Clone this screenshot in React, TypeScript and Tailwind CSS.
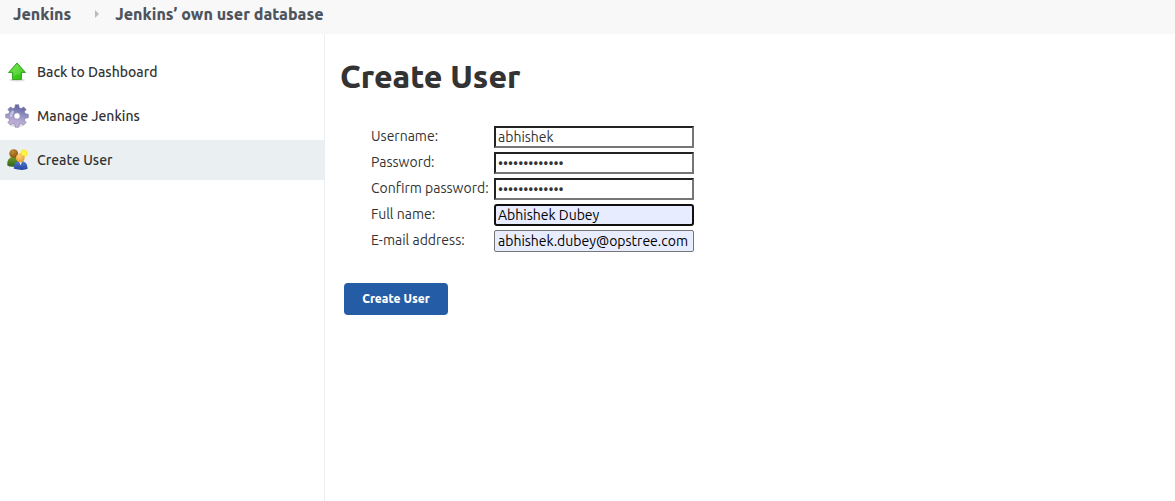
import { useState } from "react";
import type { ReactNode } from "react";

function UpArrowIcon() {
  return (
    <svg viewBox="0 0 24 24" className="size-6 shrink-0" aria-hidden="true">
      <defs>
        <linearGradient id="arrow" x1="0" y1="0" x2="1" y2="1">
          <stop offset="0" stopColor="#7be04c" />
          <stop offset="0.5" stopColor="#43d21c" />
          <stop offset="1" stopColor="#27b80c" />
        </linearGradient>
      </defs>
      <ellipse cx="12" cy="20" rx="8" ry="1.5" fill="#000" opacity="0.14" />
      <path d="M12 3 L20.5 12.5 H16.5 V19.5 H7.5 V12.5 H3.5 Z" fill="url(#arrow)" stroke="#3aa526" strokeWidth="1" strokeLinejoin="round" />
      <path d="M12 4.6 L18 11.5 H15.5 V14 Q12 14 8.6 16 V11.5 H6 Z" fill="#fff" opacity="0.15" />
    </svg>
  );
}

function GearIcon() {
  return (
    <svg viewBox="0 0 24 24" className="size-6 shrink-0" aria-hidden="true">
      <defs>
        <linearGradient id="gear" x1="0.2" y1="0" x2="0" y2="1">
          <stop offset="0" stopColor="#6667a6" />
          <stop offset="0.35" stopColor="#8f8fc0" />
          <stop offset="0.6" stopColor="#b3a8d2" />
          <stop offset="1" stopColor="#ccb6de" />
        </linearGradient>
      </defs>
      <ellipse cx="12" cy="21.3" rx="7" ry="1.8" fill="#000" opacity="0.12" />
      <path
        fill="url(#gear)"
        stroke="#7c799f"
        strokeWidth="0.6"
        strokeLinejoin="round"
        fillRule="evenodd"
        d="M10.3 0.7 H13.7 L14.2 3.8 L16.2 4.6 L18.6 2.9 L21.1 5.4 L19.4 7.8 L20.2 9.8 L23.3 10.3 V13.7 L20.2 14.2 L19.4 16.2 L21.1 18.6 L18.6 21.1 L16.2 19.4 L14.2 20.2 L13.7 23.3 H10.3 L9.8 20.2 L7.8 19.4 L5.4 21.1 L2.9 18.6 L4.6 16.2 L3.8 14.2 L0.7 13.7 V10.3 L3.8 9.8 L4.6 7.8 L2.9 5.4 L5.4 2.9 L7.8 4.6 L9.8 3.8 Z M12 8.8 A3.2 3.2 0 1 0 12 15.2 A3.2 3.2 0 1 0 12 8.8 Z"
      />
      <path d="M6.2 12.8 A6 6 0 0 1 8.6 7" fill="none" stroke="#e4e6f4" strokeWidth="2.4" opacity="0.6" />
    </svg>
  );
}

function UsersIcon() {
  return (
    <svg viewBox="0 0 24 24" className="size-6 shrink-0" aria-hidden="true">
      <defs>
        <linearGradient id="green" x1="0" y1="0" x2="0" y2="1">
          <stop offset="0" stopColor="#6d9a2c" />
          <stop offset="1" stopColor="#2f641b" />
        </linearGradient>
        <radialGradient id="brown" cx="0.4" cy="0.3" r="0.7">
          <stop offset="0" stopColor="#c48c3c" />
          <stop offset="1" stopColor="#875408" />
        </radialGradient>
        <linearGradient id="blue" x1="0" y1="0" x2="0" y2="1">
          <stop offset="0" stopColor="#5478cc" />
          <stop offset="1" stopColor="#2446a0" />
        </linearGradient>
        <radialGradient id="face" cx="0.4" cy="0.3" r="0.75">
          <stop offset="0" stopColor="#ffd280" />
          <stop offset="1" stopColor="#e79b22" />
        </radialGradient>
        <radialGradient id="glow">
          <stop offset="0" stopColor="#fffcb0" />
          <stop offset="0.5" stopColor="#fff03c" />
          <stop offset="1" stopColor="#fff03c" stopOpacity="0" />
        </radialGradient>
      </defs>
      <path d="M2.3 17.5 Q1.6 9 8.5 9 Q13 9 14 12 L12 18.5 Q5 19.5 2.3 17.5 Z" fill="url(#green)" />
      <circle cx="8.7" cy="5.6" r="4.4" fill="url(#brown)" />
      <path d="M8.8 20.8 Q8.4 13 15.5 13 Q22.6 13 22.7 20.8 Q18 23 8.8 20.8 Z" fill="url(#blue)" />
      <path d="M13.8 13 L15.6 17.5 L17.4 13 Z" fill="#dfe6f6" />
      <circle cx="19" cy="5.2" r="4.8" fill="url(#glow)" />
      <circle cx="15.3" cy="9.8" r="4.4" fill="url(#face)" />
      <circle cx="19" cy="5" r="2.6" fill="#fff64a" stroke="#f3e11a" strokeWidth="0.6" />
    </svg>
  );
}

function Task({ icon, label, active = false }: { icon: ReactNode; label: string; active?: boolean }) {
  return (
    <a
      href="#"
      aria-current={active ? "page" : undefined}
      className={`flex h-10 items-center gap-2 pl-[5px] text-sm font-[550] ${active ? "bg-[#eaeff2]" : ""}`}
    >
      {icon}
      {label}
    </a>
  );
}

const plain = "border-2 border-t-[#222] border-l-[#222] border-r-[#767676] border-b-[#767676] bg-white px-[2px]";
const focused = "rounded-[3px] border-2 border-[#101010] bg-[#e8ecff] px-[2px] text-black";
const filled = "rounded-[2px] border border-[#767676] bg-[#e8ecff] px-[3px] text-black";

const fields = [
  { id: "username", label: "Username:", type: "text", value: "abhishek", look: plain },
  { id: "password1", label: "Password:", type: "password", value: "opstree-admin", look: plain },
  { id: "password2", label: "Confirm password:", type: "password", value: "opstree-admin", look: plain },
  { id: "fullname", label: "Full name:", type: "text", value: "Abhishek Dubey", look: focused },
  { id: "email", label: "E-mail address:", type: "text", value: "abhishek.dubey@opstree.com", look: filled },
];

export default function App() {
  const [values, setValues] = useState<Record<string, string>>(
    Object.fromEntries(fields.map((f) => [f.id, f.value])),
  );

  return (
    <div className="flex min-h-screen flex-col bg-white font-['Ubuntu','Noto_Sans',sans-serif] text-sm font-[450] text-[#333]">
      <nav aria-label="Breadcrumb" className="flex h-[34px] items-center bg-[#f8f8f8] px-[13px] pb-[6px] text-base font-extrabold text-[#4d545d]">
        <a href="#">Jenkins</a>
        <svg viewBox="0 0 4 8" className="mr-4 ml-6 h-2 w-1" aria-hidden="true">
          <path d="M0 0 L4 4 L0 8 Z" fill="#bbb" />
        </svg>
        <a href="#">Jenkins’ own user database</a>
      </nav>
      <div className="flex flex-1">
        <aside className="flex w-[325px] shrink-0 flex-col gap-1 border-r border-[#eaeff2] pt-[18px]">
          <Task icon={<UpArrowIcon />} label="Back to Dashboard" />
          <Task icon={<GearIcon />} label="Manage Jenkins" />
          <Task icon={<UsersIcon />} label="Create User" active />
        </aside>
        <main className="flex-1 px-[15px] pt-[22px]">
          <h1 className="text-[32px] leading-[40px] font-extrabold">Create User</h1>
          <form onSubmit={(e) => e.preventDefault()}>
            <div className="mt-[30px] flex flex-col gap-1 pl-[31px]">
              {fields.map((f) => (
                <div key={f.id} className="flex items-center">
                  <label htmlFor={f.id} className="w-[123px] shrink-0 pb-[2px] leading-5 whitespace-nowrap">
                    {f.label}
                  </label>
                  <input
                    id={f.id}
                    type={f.type}
                    value={values[f.id]}
                    onChange={(e) => setValues({ ...values, [f.id]: e.target.value })}
                    className={`h-[22px] w-[200px] outline-none ${f.look}`}
                  />
                </div>
              ))}
            </div>
            <button type="submit" className="mt-[31px] ml-1 h-8 w-[104px] rounded-[4px] bg-[#245ca6] text-xs font-extrabold text-white">
              Create User
            </button>
          </form>
        </main>
      </div>
    </div>
  );
}
